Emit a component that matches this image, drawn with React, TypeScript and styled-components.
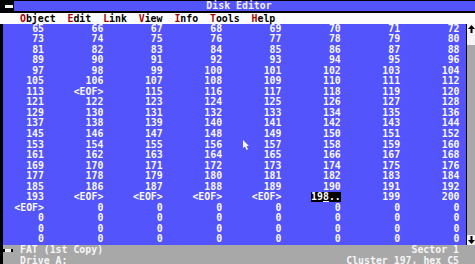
import styled, { createGlobalStyle } from 'styled-components'

const CELL = 5.94
const ROW = 10.55

const GlobalStyle = createGlobalStyle`
  html, body {
    margin: 0;
    padding: 0;
    background: #000;
    overflow: hidden;
  }
`

const Screen = styled.div`
  position: relative;
  width: 475px;
  height: 264px;
  box-sizing: border-box;
  padding: 1px 0 0 3px;
  background: #000;
  font-family: 'DejaVu Sans Mono', monospace;
  font-weight: bold;
  font-size: 9.87px;
  display: flex;
  flex-direction: column;
  overflow: hidden;
`

const TitleRow = styled.div`
  display: flex;
  height: 10px;
  flex-shrink: 0;
`

const ControlBox = styled.div<{ $w: number; $dash: number }>`
  width: ${p => p.$w}px;
  background: #000;
  display: flex;
  align-items: center;
  justify-content: center;
  flex-shrink: 0;

  &::before {
    content: '';
    width: ${p => p.$dash}px;
    height: 3px;
    background: #f4f4f4;
  }
`

const TitleBar = styled.div`
  flex: 1;
  background: #5454fc;
  color: #f0f0ff;
  text-align: center;
  line-height: 10px;
  padding-right: 11px;
`

const MenuBar = styled.nav`
  display: flex;
  gap: ${CELL * 2}px;
  height: 11px;
  margin-top: 1.5px;
  margin-left: -3px;
  padding-left: 20px;
  background: #fcfcfc;
  color: #000;
  line-height: 11px;
  flex-shrink: 0;
`

const Hotkey = styled.span`
  color: #a80000;
`

const DataArea = styled.div`
  display: flex;
  height: ${ROW * 21}px;
  flex-shrink: 0;
`

const Grid = styled.div`
  flex: 1;
  background: #5454fc;
  color: #fafaff;
  display: grid;
  grid-template-columns: 41px repeat(7, 59.37px);
  grid-auto-rows: ${ROW}px;
  line-height: ${ROW}px;
`

const Cell = styled.div`
  text-align: right;
  white-space: pre;
`

const Cursor = styled.span`
  display: inline-block;
  width: ${CELL * 5}px;
  text-align: left;
  background: #000;
  color: #fff;
  line-height: 9.5px;
`

const CaretChar = styled.span`
  text-decoration: underline;
  text-underline-offset: 1px;
  text-decoration-thickness: 1px;
`

const Scrollbar = styled.div`
  width: 8px;
  border-left: 1px solid #000;
  background: #a8a8a8;
  display: flex;
  flex-direction: column;
`

const ScrollCell = styled.div<{ $light?: boolean }>`
  height: ${ROW}px;
  background: ${p => (p.$light ? '#f4f4f4' : '#a8a8a8')};
  display: flex;
  align-items: center;
  justify-content: center;
  flex-shrink: 0;
`

const Track = styled.div`
  flex: 1;
`

const StatusRow = styled.div`
  display: flex;
  align-items: center;
  height: ${ROW}px;
  background: #a8a8a8;
  color: #f6f6f6;
  line-height: ${ROW}px;
  padding-right: 16px;
  flex-shrink: 0;
`

const StatusLabel = styled.span<{ $indent: number }>`
  flex: 1;
  padding-left: ${p => p.$indent}px;
  white-space: pre;
`

const Pointer = styled.svg`
  position: absolute;
  left: 243px;
  top: 140px;
`

const menu = ['Object', 'Edit', 'Link', 'View', 'Info', 'Tools', 'Help']

const rows: string[][] = []
for (let r = 0; r < 17; r++) {
  rows.push(Array.from({ length: 8 }, (_, c) => String(65 + r * 8 + c)))
}
rows[6][1] = '<EOF>'
rows[16] = ['193', '<EOF>', '<EOF>', '<EOF>', '<EOF>', 'CURSOR', '199', '200']
rows.push(['<EOF>', '0', '0', '0', '0', '0', '0', '0'])
for (let i = 0; i < 3; i++) rows.push(Array(8).fill('0'))

const ArrowUp = () => (
  <svg width="7" height="8" viewBox="0 0 7 8">
    <path d="M3.5 0 L7 4 L4.5 4 L4.5 8 L2.5 8 L2.5 4 L0 4 Z" fill="#000" />
  </svg>
)

const ArrowDown = () => (
  <svg width="7" height="8" viewBox="0 0 7 8">
    <path d="M3.5 8 L7 4 L4.5 4 L4.5 0 L2.5 0 L2.5 4 L0 4 Z" fill="#000" />
  </svg>
)

export default function App() {
  return (
    <>
      <GlobalStyle />
      <Screen>
        <TitleRow>
          <ControlBox $w={11} $dash={8} />
          <TitleBar>Disk Editor</TitleBar>
        </TitleRow>

        <MenuBar>
          {menu.map(m => (
            <span key={m}>
              <Hotkey>{m[0]}</Hotkey>
              {m.slice(1)}
            </span>
          ))}
        </MenuBar>

        <DataArea>
          <Grid>
            {rows.map((row, r) =>
              row.map((v, c) => (
                <Cell key={`${r}-${c}`}>
                  {v === 'CURSOR' ? (
                    <Cursor>
                      19<CaretChar>8</CaretChar>..
                    </Cursor>
                  ) : (
                    v
                  )}
                </Cell>
              ))
            )}
          </Grid>
          <Scrollbar>
            <ScrollCell $light>
              <ArrowUp />
            </ScrollCell>
            <ScrollCell $light />
            <Track />
            <ScrollCell $light>
              <ArrowDown />
            </ScrollCell>
          </Scrollbar>
        </DataArea>

        <StatusRow>
          <ControlBox $w={10} $dash={6} />
          <StatusLabel $indent={7}>FAT (1st Copy)</StatusLabel>
          <span>Sector 1</span>
        </StatusRow>
        <StatusRow>
          <StatusLabel $indent={17}>Drive A:</StatusLabel>
          <span>Cluster 197, hex C5</span>
        </StatusRow>

        <Pointer width="7" height="11" viewBox="0 0 7 11">
          <path d="M0 0 L0 8 L2 6.5 L3.5 10 L5 9.3 L3.5 6 L6 6 Z" fill="#f8f8ff" />
        </Pointer>
      </Screen>
    </>
  )
}
